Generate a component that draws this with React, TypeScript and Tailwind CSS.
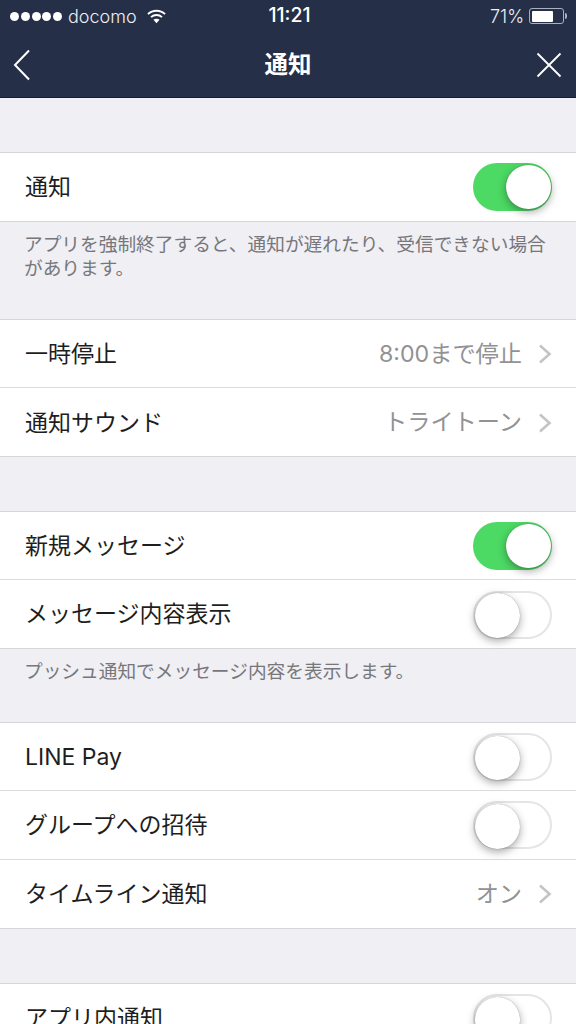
const FONT = "font-['Inter','Noto_Sans_CJK_JP',sans-serif]";

function Toggle({ on }: { on: boolean }) {
  return (
    <div
      className={`relative h-[48px] w-[79px] shrink-0 rounded-full ${
        on ? 'bg-[#4cd964]' : 'border-2 border-[#e5e5e7] bg-white'
      }`}
    >
      <div
        className={`absolute h-[44.5px] w-[44.5px] rounded-full bg-white shadow-[0_3px_8px_rgba(0,0,0,0.35),0_0_1px_rgba(0,0,0,0.4)] ${
          on ? 'right-[1.5px] top-[1.7px]' : 'left-0 top-[0.7px]'
        }`}
      />
    </div>
  );
}

function Row({ label, on, value, last }: { label: string; on?: boolean; value?: string; last?: boolean }) {
  return (
    <div
      className={`flex items-center pl-[25px] pr-[24px] pt-[1px] ${
        last ? 'h-[68px]' : 'h-[68.67px] border-b border-[#dcdce0]'
      }`}
    >
      <span className="flex-1 text-[23px] text-[#1e1e1e]">{label}</span>
      {value !== undefined ? (
        <div className="flex items-center">
          <span className="mr-[16px] text-[23.2px] text-[#929295]">{value}</span>
          <svg width="14" height="20" viewBox="0 0 14 20" fill="none" stroke="#c4c4c8" strokeWidth="2.6">
            <path d="M2 1.5 L11.5 10 L2 18.5" />
          </svg>
        </div>
      ) : (
        <Toggle on={!!on} />
      )}
    </div>
  );
}

function Group({ children }: { children: React.ReactNode }) {
  return <div className="border-y border-[#d6d6da] bg-white">{children}</div>;
}

function Note({ children, className }: { children: React.ReactNode; className: string }) {
  return <p className={`px-[24px] pt-[11px] text-[18.7px] leading-[24.5px] text-[#77777b] ${className}`}>{children}</p>;
}

export default function App() {
  return (
    <div className={`h-[1024px] w-[576px] overflow-hidden bg-[#efeff4] ${FONT}`}>
      {/* status bar + nav */}
      <div className="h-[98px] border-b border-[#171d2e] bg-[#252f47] text-white">
        <div className="relative flex h-[32px] items-center pl-[10px] pr-[9px] text-[18px]">
          <div className="flex gap-[1.75px]">
            {[0, 1, 2, 3, 4].map((i) => (
              <span key={i} className="h-[9px] w-[9px] rounded-full bg-white" />
            ))}
          </div>
          <span className="ml-[6px] font-light text-[#eef0f4]">docomo</span>
          <svg width="19" height="15" viewBox="0 0 20 15" className="ml-[10px]" fill="none" stroke="white" strokeWidth="2">
            <path d="M1 5 C6 0.2 14 0.2 19 5" />
            <path d="M4.2 8.2 C7.5 5.2 12.5 5.2 15.8 8.2" />
            <path d="M10 14.5 L6.8 11 C8.6 9.6 11.4 9.6 13.2 11 Z" fill="white" stroke="none" />
          </svg>
          <span className="absolute left-0 right-0 pl-[3px] text-center text-[19.5px] font-medium">11:21</span>
          <div className="ml-auto flex items-center">
            <span className="mr-[5px] text-[18px] font-light text-[#eef0f4]">71%</span>
            <div className="h-[16px] w-[35px] rounded-[3px] border border-[#aab0bd] p-[1.5px]">
              <div className="h-full w-[71%] rounded-[1px] bg-white" />
            </div>
            <div className="ml-[1px] h-[6px] w-[2px] rounded-r-full bg-[#aab0bd]" />
          </div>
        </div>
        <div className="relative flex h-[65px] items-center justify-center">
          <svg width="18" height="32" viewBox="0 0 18 32" className="absolute left-[13px] top-[17px]" fill="none" stroke="white" strokeWidth="2">
            <path d="M16 1.5 L2 16 L16 30.5" />
          </svg>
          <span className="text-[23.5px] font-bold">通知</span>
          <svg width="26" height="26" viewBox="0 0 26 26" className="absolute right-[14px] top-[20px]" fill="none" stroke="white" strokeWidth="1.8">
            <path d="M1.5 1.5 L24.5 24.5 M24.5 1.5 L1.5 24.5" />
          </svg>
        </div>
      </div>

      <div className="h-[53.6px]" />
      <Group>
        <Row label="通知" on last />
      </Group>
      <Note className="h-[97px]">アプリを強制終了すると、通知が遅れたり、受信できない場合があります。</Note>
      <Group>
        <Row label="一時停止" value="8:00まで停止" />
        <Row label="通知サウンド" value="トライトーン" last />
      </Group>
      <div className="h-[53.3px]" />
      <Group>
        <Row label="新規メッセージ" on />
        <Row label="メッセージ内容表示" on={false} last />
      </Group>
      <Note className="h-[72.3px]">プッシュ通知でメッセージ内容を表示します。</Note>
      <Group>
        <Row label="LINE Pay" on={false} />
        <Row label="グループへの招待" on={false} />
        <Row label="タイムライン通知" value="オン" last />
      </Group>
      <div className="h-[54px]" />
      <Group>
        <Row label="アプリ内通知" on={false} last />
      </Group>
    </div>
  );
}
